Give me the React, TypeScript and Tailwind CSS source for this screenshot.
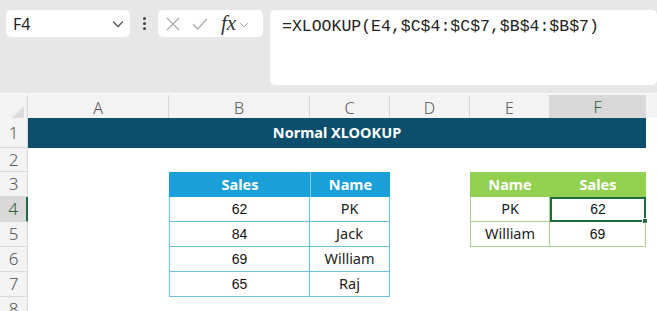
import React from 'react';

const cols = ['A', 'B', 'C', 'D', 'E', 'F'];
const blueRows = [
  ['62', 'PK'],
  ['84', 'Jack'],
  ['69', 'William'],
  ['65', 'Raj'],
];
const greenRows = [
  ['PK', '62'],
  ['William', '69'],
];

const ui = "font-['Noto_Sans',sans-serif]";
const num = "font-['Liberation_Sans',Arial,sans-serif]";

function Chevron({ className }: { className?: string }) {
  return (
    <svg viewBox="0 0 12 8" className={className} fill="none" stroke="currentColor" strokeWidth="1.3">
      <path d="M1 1.5l5 5 5-5" />
    </svg>
  );
}

function Toolbar() {
  return (
    <div className="flex h-[93px] gap-[7px] bg-[#e7e7e7] pl-[6px] pt-[10px]">
      <div className="flex h-[27px] w-[124px] items-center justify-between rounded-[5px] bg-white pl-[7px] pr-[6px]">
        <span className={`${ui} text-[16px] text-[#222]`}>F4</span>
        <Chevron className="h-[8px] w-[12px] text-[#555]" />
      </div>
      <div className="flex h-[27px] w-[14px] flex-col items-center justify-center gap-[2px]">
        <span className="h-[3px] w-[3px] rounded-full bg-[#444]" />
        <span className="h-[3px] w-[3px] rounded-full bg-[#444]" />
        <span className="h-[3px] w-[3px] rounded-full bg-[#444]" />
      </div>
      <div className="flex h-[27px] w-[105px] items-center rounded-[5px] bg-white pl-[8px]">
        <svg viewBox="0 0 14 14" className="h-[14px] w-[14px] text-[#aaa]" fill="none" stroke="currentColor" strokeWidth="1.2">
          <path d="M1 1l12 12M13 1L1 13" />
        </svg>
        <svg viewBox="0 0 16 12" className="ml-[12px] h-[12px] w-[16px] text-[#aaa]" fill="none" stroke="currentColor" strokeWidth="1.2">
          <path d="M1 6l4.5 5L15 1" />
        </svg>
        <span className="ml-[13px] font-['Liberation_Serif',serif] text-[21px] italic leading-none text-[#333]">fx</span>
        <Chevron className="ml-[3px] mt-[2px] h-[6px] w-[10px] text-[#999]" />
      </div>
      <div className="h-[75px] flex-1 rounded-[5px] bg-white pl-[12px] pt-[3px]">
        <span className="font-['Liberation_Mono',monospace] text-[16.5px] text-[#222]">=XLOOKUP(E4,$C$4:$C$7,$B$4:$B$7)</span>
      </div>
    </div>
  );
}

const grid = 'grid grid-cols-[28px_141px_141px_80px_80px_80px_96px_1fr]';

function HeaderRow() {
  return (
    <div className={`${grid} h-[23px] bg-[#f3f3f3]`}>
      <div className="relative border-r border-[#d6d6d6]">
        <svg viewBox="0 0 10 10" className="absolute bottom-[3px] right-[3px] h-[12px] w-[12px]">
          <path d="M10 0V10H0Z" fill="#dcdcdc" />
        </svg>
      </div>
      {cols.map((c) => (
        <div
          key={c}
          className={`flex items-center justify-center border-r border-[#d9d9d9] ${ui} text-[16px] font-light ${
            c === 'F' ? 'border-b-2 border-b-[#1e6b41] bg-[#d9d9d9] text-[#2f5d3d]' : 'text-[#555]'
          }`}
        >
          {c}
        </div>
      ))}
      <div />
    </div>
  );
}

function RowNum({ n, h, active }: { n: number; h: string; active?: boolean }) {
  return (
    <div
      className={`flex ${h} items-center justify-center border-b border-r border-[#d9d9d9] ${ui} text-[17px] font-light ${
        active ? 'border-r-2 border-r-[#1e6b41] bg-[#d9d9d9] text-[#2f5d3d]' : 'bg-[#f3f3f3] text-[#555]'
      }`}
    >
      {n}
    </div>
  );
}

export default function App() {
  return (
    <div className="h-[311px] w-[657px] overflow-hidden bg-white">
      <Toolbar />
      <div className="h-[2px] bg-[#f6f6f6]" />
      <HeaderRow />
      <div className={grid}>
        {/* row 1 */}
        <RowNum n={1} h="h-[30px]" />
        <div className={`col-span-6 flex items-center justify-center bg-[#0b4f6c] ${ui} text-[14.5px] font-bold text-white`}>
          Normal XLOOKUP
        </div>
        <div />
        {/* row 2 */}
        <RowNum n={2} h="h-[24px]" />
        <div className="col-span-7" />
        {/* row 3 */}
        <RowNum n={3} h="h-[25px]" />
        <div />
        <div className={`flex items-center justify-center border-l border-[#1a9fd9] bg-[#1a9fd9] ${ui} text-[14.5px] font-bold text-white`}>Sales</div>
        <div className={`flex items-center justify-center border-l border-[#7fcbe8] bg-[#1a9fd9] ${ui} text-[14.5px] font-bold text-white`}>Name</div>
        <div />
        <div className={`flex items-center justify-center bg-[#92d050] ${ui} text-[14.5px] font-bold text-white`}>Name</div>
        <div className={`flex items-center justify-center bg-[#92d050] ${ui} text-[14.5px] font-bold text-white`}>Sales</div>
        <div />
        {/* rows 4-7 */}
        {blueRows.map((r, i) => {
          const g = greenRows[i];
          const isActive = i === 0;
          return (
            <React.Fragment key={i}>
              <RowNum n={i + 4} h="h-[25px]" active={isActive} />
              <div />
              <div className={`flex items-center justify-center border-b border-l border-r border-[#6cc0e0] ${num} text-[14px] text-[#111]`}>{r[0]}</div>
              <div className={`flex items-center justify-center border-b border-r border-[#6cc0e0] ${ui} text-[14.5px] text-[#222]`}>{r[1]}</div>
              <div />
              {g ? (
                <>
                  <div className={`flex items-center justify-center border-b border-l border-r border-[#a9d08e] ${ui} text-[14.5px] text-[#222]`}>{g[0]}</div>
                  <div
                    className={`relative flex items-center justify-center ${num} text-[14px] text-[#111] ${
                      isActive ? 'border-2 border-[#1e6b41]' : 'border-b border-r border-[#a9d08e]'
                    }`}
                  >
                    {g[1]}
                    {isActive && <span className="absolute -bottom-[4px] -right-[4px] h-[6px] w-[6px] border border-white bg-[#1e6b41]" />}
                  </div>
                </>
              ) : (
                <>
                  <div />
                  <div />
                </>
              )}
              <div />
            </React.Fragment>
          );
        })}
        {/* row 8 */}
        <RowNum n={8} h="h-[25px]" />
        <div className="col-span-7" />
      </div>
    </div>
  );
}
